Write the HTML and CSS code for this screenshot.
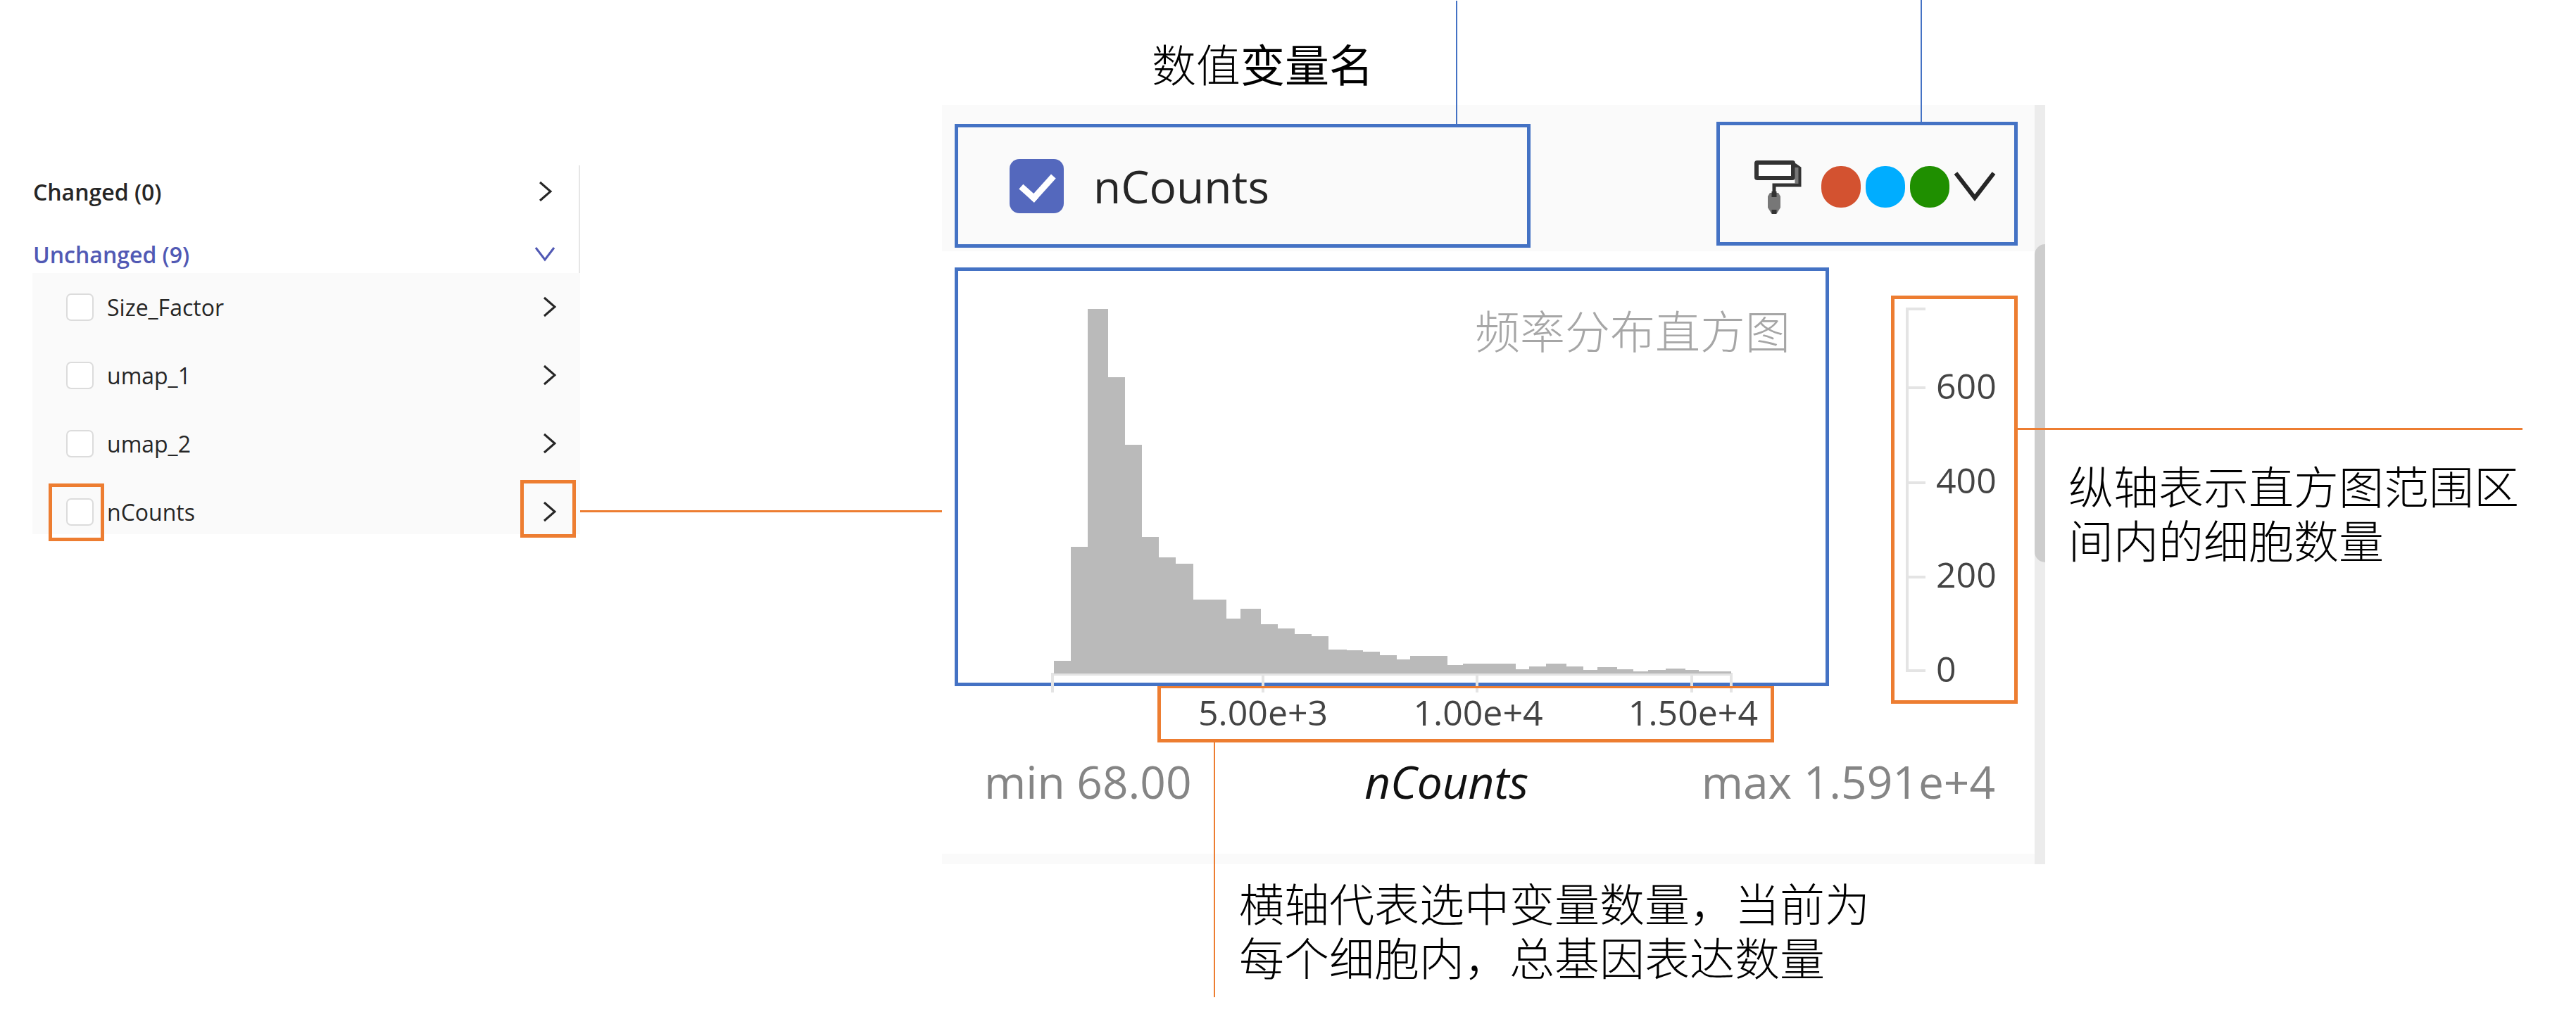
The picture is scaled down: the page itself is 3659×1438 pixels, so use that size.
FILE: index.html
```html
<!DOCTYPE html>
<html lang="zh-CN">
<head>
<meta charset="utf-8">
<meta name="viewport" content="width=device-width, initial-scale=1">
<title>数值变量名</title>
<link rel="stylesheet" href="styles.css">
</head>
<body>
<main class="guide">
  <nav class="fields" aria-label="Fields">
    <button class="group" type="button">Changed (0)
      <svg class="chevron" viewBox="0 0 20 30"><path d="M2 2 17 15 2 28"/></svg>
    </button>
    <button class="group group-open" type="button">Unchanged (9)
      <svg class="chevron-down" viewBox="0 0 30 22"><path d="M2 2 15 19 28 2"/></svg>
    </button>
    <ul class="field-list">
      <li class="field">
        <label class="field-label"><span class="tick"><input class="box" type="checkbox"></span>Size_Factor</label>
        <button class="expand" type="button" aria-label="Expand Size_Factor"><svg class="chevron" viewBox="0 0 20 30"><path d="M2 2 17 15 2 28"/></svg></button>
      </li>
      <li class="field">
        <label class="field-label"><span class="tick"><input class="box" type="checkbox"></span>umap_1</label>
        <button class="expand" type="button" aria-label="Expand umap_1"><svg class="chevron" viewBox="0 0 20 30"><path d="M2 2 17 15 2 28"/></svg></button>
      </li>
      <li class="field">
        <label class="field-label"><span class="tick"><input class="box" type="checkbox"></span>umap_2</label>
        <button class="expand" type="button" aria-label="Expand umap_2"><svg class="chevron" viewBox="0 0 20 30"><path d="M2 2 17 15 2 28"/></svg></button>
      </li>
      <li class="field">
        <label class="field-label"><span class="tick tick-marked"><input class="box" type="checkbox"></span>nCounts</label>
        <button class="expand expand-marked" type="button" aria-label="Expand nCounts"><svg class="chevron" viewBox="0 0 20 30"><path d="M2 2 17 15 2 28"/></svg></button>
      </li>
    </ul>
  </nav>

  <div class="link-to-card"></div>

  <section class="detail">
    <h1 class="title">数值<span class="title-strong">变量名</span></h1>

    <div class="card">
      <div class="card-main">
        <header class="card-head">
          <label class="name-box"><input class="box-large" type="checkbox" checked>nCounts</label>
          <button class="palette" type="button" aria-label="Colors">
            <svg class="roller" viewBox="0 0 68 80">
              <rect x="4" y="6" width="52" height="22" rx="1" fill="#fff" stroke="#333" stroke-width="6"/>
              <path d="M58 9 65 14V38H29V50" fill="none" stroke="#333" stroke-width="5"/>
              <path d="M61 13V36" stroke="#777" stroke-width="5"/>
              <path d="M23 49h12l3 5v16l-5 8h-8l-5-8V54z" fill="#777"/>
              <path d="M29 47v8M29 73v6" stroke="#333" stroke-width="7"/>
            </svg>
            <span class="dots"><i class="dot dot-red"></i><i class="dot dot-blue"></i><i class="dot dot-green"></i></span>
            <svg class="palette-arrow" viewBox="0 0 60 42"><path d="M3 2 30 37 57 2"/></svg>
          </button>
        </header>

        <div class="plot">
          <div class="plot-left">
            <figure class="histogram">
              <figcaption class="caption">频率分布直方图</figcaption>
              <svg class="bars" viewBox="0 0 968 550" preserveAspectRatio="none">
                <path class="axis" d="M2 550V524H966V550M301 524V550M605 524V550M910 524V550"/>
                <path class="area" d="M4 523V505H28V343H52V5H81V102H105V198H129V329H153V358H177V367H202V418H249V445H269V431H298V453H322V459H346V467H370V470H394V489H420V490H443V492H467V497H491V503H510V498H563V511H585V509H660V517H679V513H703V509H732V513H756V518H776V514H804V517H827V520H848V518H873V516H901V518H920V520H966V523z"/>
              </svg>
            </figure>
            <div class="x-labels"><span>5.00e+3</span><span>1.00e+4</span><span>1.50e+4</span></div>
          </div>
          <div class="y-axis">
            <svg class="y-ticks" viewBox="0 0 28 520" preserveAspectRatio="none"><path class="axis" d="M28 3H2V517H28M2 115H28M2 250H28M2 384H28"/></svg>
            <ul class="y-labels"><li>600</li><li>400</li><li>200</li><li>0</li></ul>
          </div>
        </div>

        <footer class="stats"><span>min 68.00</span><em class="stats-name">nCounts</em><span>max 1.591e+4</span></footer>
      </div>
      <div class="scrollbar"><div class="thumb"></div></div>
    </div>

    <p class="note note-x">横轴代表选中变量数量，当前为<br>每个细胞内，总基因表达数量</p>
  </section>

  <aside class="side-note">
    <div class="side-line"></div>
    <p class="note">纵轴表示直方图范围区<br>间内的细胞数量</p>
  </aside>
</main>
</body>
</html>
```
FILE: styles.css
```css
:root {
  --blue: #4472c4;
  --orange: #ed7d31;
  --cjk: "Noto Sans CJK SC", sans-serif;
}

*, *::before, *::after { box-sizing: border-box; }

body {
  margin: 0;
  background: #fff;
  color: #262626;
  font-family: "Open Sans", "Noto Sans", sans-serif;
}

button {
  padding: 0;
  border: 0;
  background: none;
  color: inherit;
  font: inherit;
}

ul { margin: 0; padding: 0; list-style: none; }
svg { display: block; flex: none; }

.guide {
  display: grid;
  grid-template-columns: 824fr 514fr 1567fr 754fr;
  min-height: 100vh;
}

/* Field list */
.fields {
  display: flex;
  flex-direction: column;
  margin-top: 235px;
  padding-left: 46px;
  font-size: 32px;
}

.group {
  display: flex;
  align-items: center;
  justify-content: space-between;
  height: 74px;
  padding: 0 37px 0 1px;
  border-right: 2px solid #e6e6e6;
  font-weight: 600;
}

.group-open {
  height: 79px;
  padding-top: 25px;
  padding-right: 33px;
  color: #5159b4;
}

.chevron { width: 20px; height: 30px; }
.chevron-down { width: 30px; height: 22px; }
.chevron path, .chevron-down path, .palette-arrow path {
  fill: none;
  stroke: currentColor;
  stroke-width: 3;
}

.field-list {
  display: flex;
  flex-direction: column;
  gap: 33px;
  padding-top: 16px;
  background: #fafafa;
}

.field {
  display: flex;
  align-items: center;
  justify-content: space-between;
  height: 64px;
  padding: 0 6px 0 48px;
}

.field-label { display: flex; align-items: center; gap: 19px; }
.tick { position: relative; display: flex; }

.tick-marked::after {
  content: "";
  position: absolute;
  left: -25px;
  top: -21px;
  width: 79px;
  height: 82px;
  border: 5px solid var(--orange);
}

.box {
  appearance: none;
  width: 39px;
  height: 39px;
  margin: 0;
  border: 2px solid #dcdcdc;
  border-radius: 7px;
  background: #fff;
}

.expand {
  display: flex;
  align-items: center;
  justify-content: flex-end;
  width: 79px;
  height: 82px;
  margin-bottom: 8px;
  padding: 8px 22px 0 0;
  border: 5px solid transparent;
}

.expand-marked { border-color: var(--orange); }

.link-to-card {
  height: 3px;
  margin-top: 725px;
  background: var(--orange);
}

/* Detail column */
.title {
  height: 149px;
  margin: 0;
  padding: 43px 0 0 298px;
  color: #000;
  font-family: var(--cjk);
  font-size: 63px;
  font-weight: 300;
  line-height: 92px;
}

.title-strong { font-weight: 400; }
.card { display: flex; }
.card-main {
  flex: 1;
  min-width: 0;
  border-bottom: 15px solid #fafafa;
}

.card-head {
  display: flex;
  justify-content: space-between;
  height: 208px;
  padding: 24px 24px 5px 18px;
  background: #fafafa;
}

.name-box, .palette {
  position: relative;
  display: flex;
  align-items: center;
  height: 176px;
  border: 5px solid var(--blue);
}

.name-box {
  flex: 0 1 818px;
  align-self: flex-end;
  gap: 42px;
  padding-left: 73px;
  font-size: 64px;
}

.palette { width: 428px; padding: 8px 0 0 48px; }

.name-box::before, .palette::before {
  content: "";
  position: absolute;
  bottom: 100%;
  width: 2px;
  height: 180px;
  background: var(--blue);
}

.name-box::before { left: 707px; }
.palette::before { left: 285px; }

.box-large {
  appearance: none;
  width: 77px;
  height: 77px;
  margin: 0;
  border-radius: 14px;
  background: #5468bd;
}

.box-large::before {
  content: "";
  display: block;
  width: 29px;
  height: 46px;
  margin: 12px 0 0 25px;
  border: solid #fff;
  border-width: 0 9px 9px 0;
  rotate: 42deg;
}

.roller { width: 68px; height: 80px; }
.dots { display: flex; gap: 7px; margin-left: 28px; }
.dot { width: 56px; height: 59px; border-radius: 27px; }
.dot-red { background: #d35230; }
.dot-blue { background: #00adff; }
.dot-green { background: #1f8f00; }
.palette-arrow { width: 60px; height: 42px; margin-left: 6px; }
.palette-arrow path { stroke-width: 6; }

/* Histogram */
.plot {
  display: flex;
  gap: 88px;
  padding: 23px 24px 0 18px;
  height: 698px;
}

.plot-left { flex: 1; min-width: 0; }

.histogram {
  display: flex;
  flex-direction: column;
  height: 595px;
  margin: 0;
  border: 5px solid var(--blue);
}

.caption {
  height: 49px;
  padding-right: 50px;
  color: #a6a6a6;
  font-family: var(--cjk);
  font-size: 64px;
  font-weight: 300;
  line-height: 165px;
  text-align: right;
}

.bars { width: calc(100% - 264px); height: 550px; margin-left: 132px; }
.area { fill: #bababa; shape-rendering: crispEdges; }
.axis { fill: none; stroke: #e4e4e4; stroke-width: 4; }

.x-labels {
  position: relative;
  display: flex;
  align-items: center;
  justify-content: space-between;
  height: 80px;
  margin: 0 78px 0 288px;
  padding: 0 18px 4px 53px;
  border: 5px solid var(--orange);
  border-top-width: 3px;
  color: #444;
  font-size: 50px;
}

.x-labels::after {
  content: "";
  position: absolute;
  left: 75px;
  top: 100%;
  width: 2px;
  height: 367px;
  background: var(--orange);
}

.y-axis {
  position: relative;
  display: flex;
  gap: 15px;
  width: 180px;
  height: 580px;
  margin-top: 40px;
  padding-left: 16px;
  border: 5px solid var(--orange);
  color: #444;
  font-size: 50px;
  line-height: 134px;
}

.y-axis::after {
  content: "";
  position: absolute;
  left: 100%;
  top: 183px;
  width: 44px;
  height: 3px;
  background: var(--orange);
}

.y-ticks { width: 28px; height: 520px; margin-top: 11px; }
.y-labels { padding-top: 56px; }

.stats {
  display: flex;
  justify-content: space-between;
  height: 158px;
  padding: 12px 56px 0 60px;
  color: #858585;
  font-size: 64px;
  line-height: 88px;
}

.stats-name { color: #111; }

.scrollbar { width: 15px; padding-top: 198px; background: #ececec; }
.thumb { height: 452px; border-radius: 15px 0 0 15px; background: #cdcdcd; }

/* Notes */
.note {
  margin: 0;
  color: #000;
  font-family: var(--cjk);
  font-size: 64px;
  font-weight: 300;
  line-height: 77px;
  white-space: nowrap;
}

.note-x { padding: 15px 0 0 422px; }
.side-note { padding-top: 608px; }
.side-line { height: 3px; margin: 0 76px 39px 0; background: var(--orange); }
.side-note .note { padding-left: 33px; }
```
